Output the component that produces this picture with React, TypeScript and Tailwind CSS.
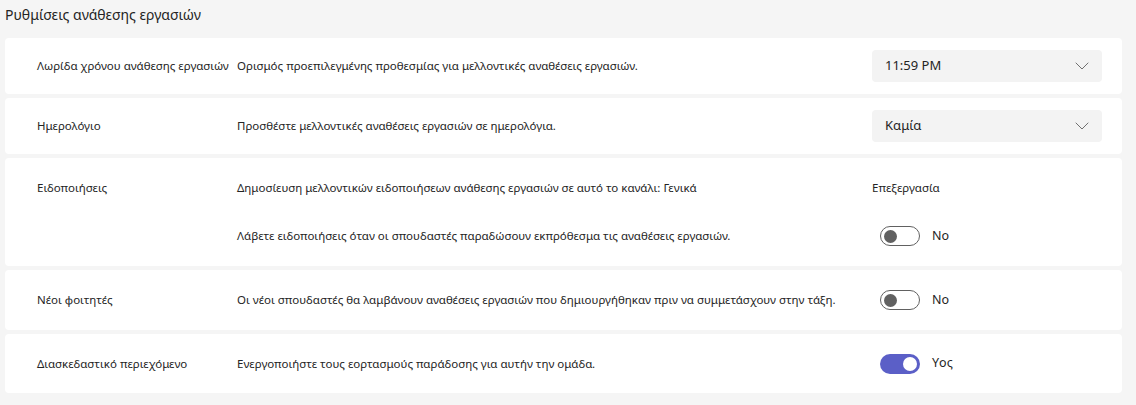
import { ChevronDown } from "lucide-react";

const font = { fontFamily: '"Noto Sans", "Open Sans", sans-serif' };

const Dropdown = ({ value }: { value: string }) => (
    <div className="flex h-8 w-[230px] items-center justify-between rounded-[4px] bg-[#f3f3f3] pl-[13px] pr-2 text-[13px] text-[#242424]">
        <span>{value}</span>
        <ChevronDown size={24} strokeWidth={1} className="text-[#707070]" />
    </div>
);

const Toggle = ({ on }: { on?: boolean }) => (
    <div className="ml-2 flex items-center gap-3">
        {on ? (
            <div className="flex h-5 w-10 items-center justify-end rounded-full bg-[#5b5fc7] px-[3px]">
                <div className="h-[14px] w-[14px] rounded-full bg-white" />
            </div>
        ) : (
            <div className="flex h-5 w-10 items-center rounded-full border border-[#616161] bg-white px-[3px]">
                <div className="h-[13px] w-[13px] rounded-full bg-[#616161]" />
            </div>
        )}
        <span className="text-[12.5px] text-[#242424]">{on ? "Yος" : "No"}</span>
    </div>
);

interface RowProps {
    label: string;
    description: string;
    right: React.ReactNode;
    height: string;
}

const Row = ({ label, description, right, height }: RowProps) => (
    <div className={`flex items-center rounded-[4px] bg-white pl-8 pr-5 ${height}`}>
        <div className="w-[200px] shrink-0 whitespace-nowrap text-[11.5px] text-[#242424]">{label}</div>
        <div className="flex-1 text-[11.5px] text-[#242424]">{description}</div>
        <div className="w-[230px] shrink-0">{right}</div>
    </div>
);

export default function App() {
    return (
        <div className="min-h-screen bg-[#f5f5f5] px-[5px] pb-3" style={font}>
            <h1 className="h-[38px] pt-[3px] text-[14px] leading-6 text-[#242424]">Ρυθμίσεις ανάθεσης εργασιών</h1>

            <div className="flex w-[1117px] flex-col gap-1">
                <Row
                    height="h-14"
                    label="Λωρίδα χρόνου ανάθεσης εργασιών"
                    description="Ορισμός προεπιλεγμένης προθεσμίας για μελλοντικές αναθέσεις εργασιών."
                    right={<Dropdown value="11:59 PM" />}
                />
                <Row
                    height="h-14"
                    label="Ημερολόγιο"
                    description="Προσθέστε μελλοντικές αναθέσεις εργασιών σε ημερολόγια."
                    right={<Dropdown value="Καμία" />}
                />

                <div className="flex h-[108px] rounded-[4px] bg-white pl-8 pr-5 pt-[20px]">
                    <div className="w-[200px] shrink-0 pt-[1px] text-[11.5px] text-[#242424]">Ειδοποιήσεις</div>
                    <div className="flex flex-1 flex-col">
                        <div className="flex h-5 items-center">
                            <div className="flex-1 text-[11.5px] text-[#242424]">
                                Δημοσίευση μελλοντικών ειδοποιήσεων ανάθεσης εργασιών σε αυτό το κανάλι: Γενικά
                            </div>
                            <div className="w-[230px] shrink-0 text-[11.5px] text-[#242424]">Επεξεργασία</div>
                        </div>
                        <div className="mt-[28px] flex h-5 items-center">
                            <div className="flex-1 text-[11.5px] text-[#242424]">
                                Λάβετε ειδοποιήσεις όταν οι σπουδαστές παραδώσουν εκπρόθεσμα τις αναθέσεις εργασιών.
                            </div>
                            <div className="w-[230px] shrink-0">
                                <Toggle />
                            </div>
                        </div>
                    </div>
                </div>

                <Row
                    height="h-[60px]"
                    label="Νέοι φοιτητές"
                    description="Οι νέοι σπουδαστές θα λαμβάνουν αναθέσεις εργασιών που δημιουργήθηκαν πριν να συμμετάσχουν στην τάξη."
                    right={<Toggle />}
                />
                <Row
                    height="h-[59px]"
                    label="Διασκεδαστικό περιεχόμενο"
                    description="Ενεργοποιήστε τους εορτασμούς παράδοσης για αυτήν την ομάδα."
                    right={<Toggle on />}
                />
            </div>
        </div>
    );
}
